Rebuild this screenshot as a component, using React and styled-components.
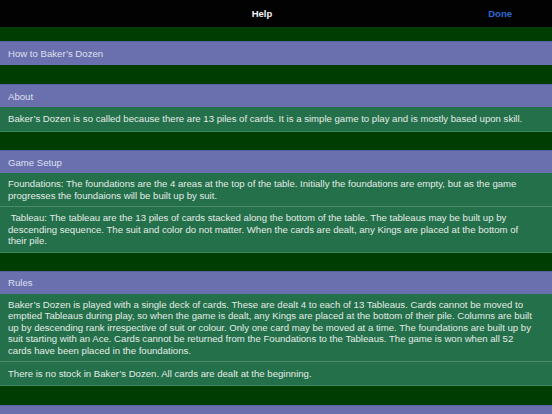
import React from 'react';
import styled, { createGlobalStyle } from 'styled-components';

const sections = [
  {
    title: 'About',
    cells: [
      'Baker\u2019s Dozen is so called because there are 13 piles of cards. It is a simple game to play and is mostly based upon skill.',
    ],
  },
  {
    title: 'Game Setup',
    cells: [
      'Foundations: The foundations are the 4 areas at the top of the table. Initially the foundations are empty, but as the game progresses the foundaions will be built up by suit.',
      '\u00a0Tableau: The tableau are the 13 piles of cards stacked along the bottom of the table. The tableaus may be built up by descending sequence. The suit and color do not matter. When the cards are dealt, any Kings are placed at the bottom of their pile.',
    ],
  },
  {
    title: 'Rules',
    cells: [
      'Baker\u2019s Dozen is played with a single deck of cards. These are dealt 4 to each of 13 Tableaus. Cards cannot be moved to emptied Tableaus during play, so when the game is dealt, any Kings are placed at the bottom of their pile. Columns are built up by descending rank irrespective of suit or colour. Only one card may be moved at a time. The foundations are built up by suit starting with an Ace. Cards cannot be returned from the Foundations to the Tableaus. The game is won when all 52 cards have been placed in the foundations.',
      'There is no stock in Baker\u2019s Dozen. All cards are dealt at the beginning.',
    ],
  },
];

const App = () => {
  return (
    <>
      <GlobalStyle />
      <Screen>
        <NavBar>
          <Title>Help</Title>
          <DoneButton>Done</DoneButton>
        </NavBar>
        <Spacer $h={14} />
        <SectionHeader $h={24}>How to Baker&rsquo;s Dozen</SectionHeader>
        {sections.map((s, idx) => (
          <React.Fragment key={s.title}>
            <Spacer $h={idx === 0 ? 19 : 18} />
            <SectionHeader>{s.title}</SectionHeader>
            <Body>
              {s.cells.map((text, i) => (
                <Cell key={i}>
                  <span>{text}</span>
                </Cell>
              ))}
            </Body>
          </React.Fragment>
        ))}
        <Spacer $h={19} />
        <SectionHeader />
      </Screen>
    </>
  );
};

export default App;

// Styled Components
const GlobalStyle = createGlobalStyle`
  *, *::before, *::after {
    box-sizing: border-box;
  }

  html, body {
    margin: 0;
    padding: 0;
    background: #003d02;
    overflow: hidden;
  }
`;

const Screen = styled.div`
  width: 552px;
  height: 414px;
  display: flex;
  flex-direction: column;
  background: #003d02;
  font-family: "Liberation Sans", Arial, sans-serif;
  overflow: hidden;
`;

const NavBar = styled.div`
  height: 27px;
  flex-shrink: 0;
  background: #020202;
  display: flex;
  align-items: center;
  position: relative;
  padding: 0 40px 0 0;
  justify-content: flex-end;
`;

const Title = styled.div`
  position: absolute;
  left: 0;
  right: 28px;
  text-align: center;
  color: #f4f4f4;
  font-size: 9.5px;
  font-weight: bold;
`;

const DoneButton = styled.div`
  color: #2c6ad8;
  font-size: 9.5px;
  font-weight: bold;
`;

const Spacer = styled.div`
  height: ${(p) => p.$h}px;
  flex-shrink: 0;
`;

const SectionHeader = styled.div`
  height: ${(p) => p.$h || 23}px;
  flex-shrink: 0;
  background: #6a6fae;
  color: #dfe0f0;
  font-size: 9.6px;
  display: flex;
  align-items: center;
  padding-left: 8px;
  border-top: 1px solid #5c62a0;
`;

const Body = styled.div`
  background: #23704b;
  flex-shrink: 0;
`;

const Cell = styled.div`
  min-height: 25px;
  display: flex;
  align-items: center;
  padding: 5px 15px 5px 8px;
  color: #e4ebe6;
  font-size: 9.6px;
  line-height: 11.5px;

  & + & {
    border-top: 1px solid #4a8c69;
  }

  &:last-child {
    border-bottom: 1px solid #3a8760;
  }
`;
